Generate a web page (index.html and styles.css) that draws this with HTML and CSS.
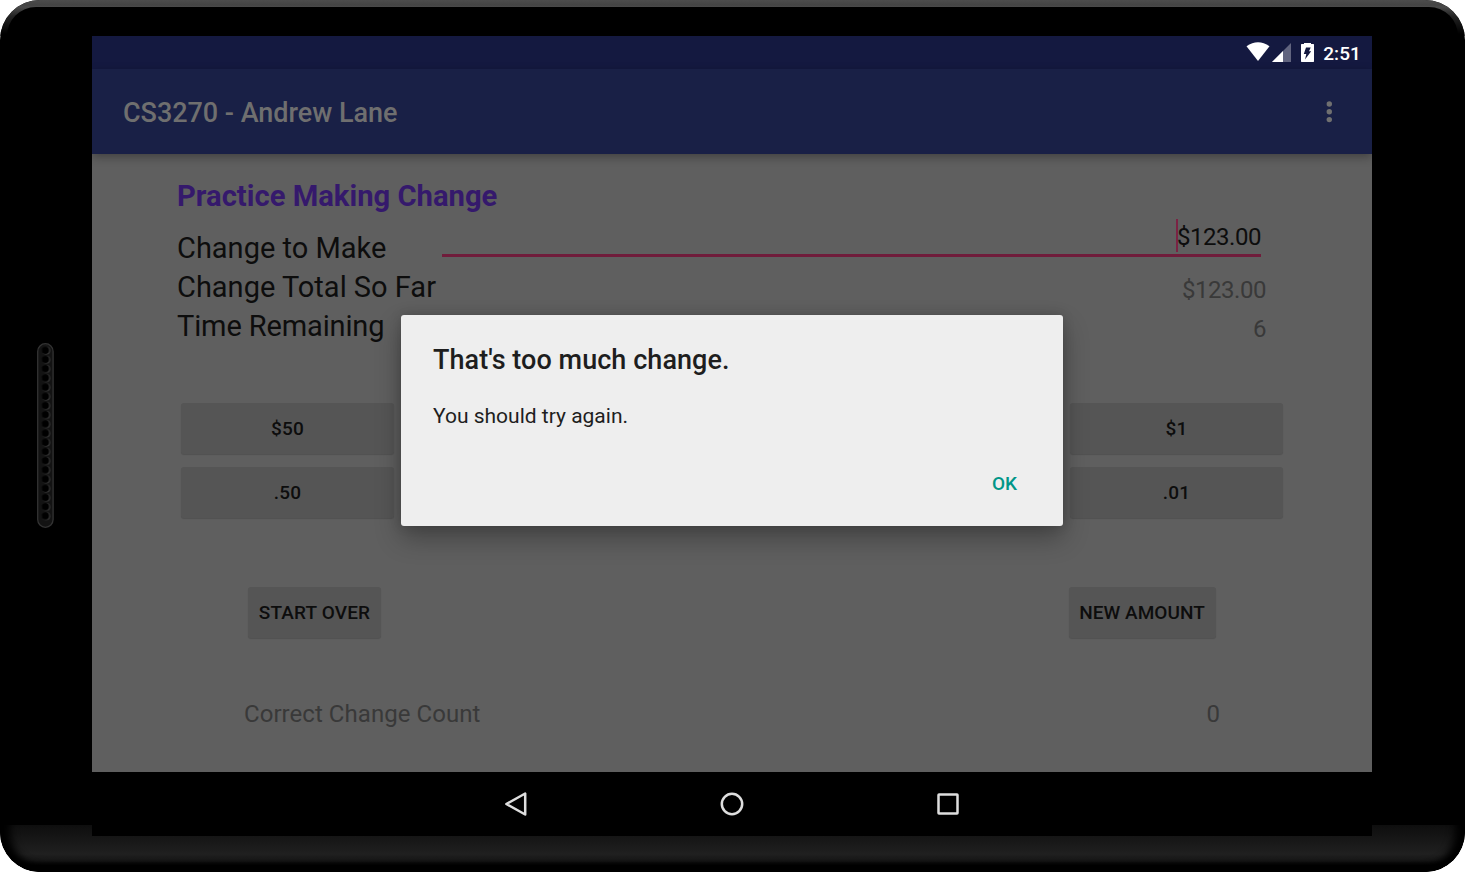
FILE: index.html
```html
<!DOCTYPE html>
<html lang="en">
<head>
<meta charset="utf-8">
<title>CS3270 - Andrew Lane</title>
<link rel="stylesheet" href="styles.css">
</head>
<body>
<div class="device">
  <div class="base"></div>
  <svg class="speaker" width="18" height="186" viewBox="0 0 18 186">
    <defs>
      <pattern id="holes" width="18" height="9.2" patternUnits="userSpaceOnUse" y="3.2">
        <circle cx="9.7" cy="4.8" r="3.9" fill="#444"/>
        <circle cx="9" cy="4.6" r="3.7" fill="#000"/>
      </pattern>
    </defs>
    <rect x="1.7" y="1.7" width="15.4" height="183.6" rx="7.7" fill="#131313" stroke="#333" stroke-width="1.3"/>
    <rect x="3" y="3.2" width="12" height="175" fill="url(#holes)" transform="translate(.5 .5)"/>
  </svg>
  <div class="screen">
    <div class="status">
      <svg class="wifi" width="24" height="20" viewBox="0 0 24 20"><path d="M.5 4.3Q12-3.700 23.500 4.300L12 19Z" fill="#fff"/></svg>
      <svg class="signal" width="19" height="19" viewBox="0 0 19 19"><path d="M19 0V19H0Z" fill="#fff" opacity=".33"/><path d="M11 8V19H0Z" fill="#fff"/></svg>
      <svg class="battery" width="13" height="19" viewBox="0 0 13 19"><path d="M3 0H10V1H12.500L13 1.500V18.500L12.500 19H.5L0 18.500V1.500L.5 1H3Z" fill="#fff"/><path d="M5 4.500H9.700L8 8.300H10.200L4 16.500L5.300 11H2.800Z" fill="#141940"/></svg>
      <span class="clock">2:51</span>
    </div>
    <header class="appbar">
      <h1 class="apptitle">CS3270 - Andrew Lane</h1>
      <svg class="more" width="6" height="22" viewBox="0 0 6 22" fill="#707070"><circle cx="3.300" cy="3" r="2.700"/><circle cx="3.300" cy="10.800" r="2.700"/><circle cx="3.300" cy="18.600" r="2.700"/></svg>
    </header>
    <main class="content">
      <h2 class="heading">Practice Making Change</h2>
      <div class="row edit"><span class="label">Change to Make</span><div class="field"><span class="cursor"></span>$123.00</div></div>
      <div class="row"><span class="label">Change Total So Far</span><span class="value">$123.00</span></div>
      <div class="row"><span class="label tight">Time Remaining</span><span class="value">6</span></div>
      <div class="keys">
        <button class="btn">$50</button><button class="btn">$1</button>
        <button class="btn">.50</button><button class="btn">.01</button>
      </div>
      <div class="actions"><button class="btn">START OVER</button><button class="btn wide">NEW AMOUNT</button></div>
      <div class="count"><span>Correct Change Count</span><span>0</span></div>
    </main>
    <nav class="navbar">
      <svg width="24" height="26" viewBox="0 0 24 26"><path d="M21.200 2.500V23.500L2.300 13Z"/></svg>
      <svg width="24" height="26" viewBox="0 0 24 26"><circle cx="12" cy="13" r="10.200"/></svg>
      <svg width="24" height="26" viewBox="0 0 24 26"><rect x="2.500" y="3.500" width="19" height="19" rx=".5"/></svg>
    </nav>
    <div class="dialog" role="dialog">
      <h3 class="dtitle">That's too much change.</h3>
      <p class="dtext">You should try again.</p>
      <button class="ok">OK</button>
    </div>
  </div>
</div>
</body>
</html>
```
FILE: styles.css
```css
* { box-sizing: border-box; }
body { margin: 0; background: #fff; font-family: Roboto, sans-serif; }
h1, h2, h3, p { margin: 0; }
button { border: 0; font-family: inherit; padding: 0; }
svg { display: block; flex: none; }

.device {
  position: relative;
  width: 1465px;
  height: 872px;
  padding: 36px 93px 36px 92px;
  background: #000;
  border-radius: 40px;
  overflow: hidden;
}
/* lit top edge, fading out down the corners */
.device::before {
  content: "";
  position: absolute;
  inset: 0 0 auto;
  height: 36px;
  background: linear-gradient(#4c4c4c, #444 5px, #4a4a4a 7px, #242424 16px, #000 34px);
}
.base {
  position: absolute;
  left: 0;
  right: 0;
  bottom: 0;
  height: 47px;
  overflow: hidden;
  border-radius: 0 0 40px 40px;
  background: linear-gradient(#0e0e0e, #202020 62%, #181818 75%, #000 89%);
}
.base::before {
  content: "";
  position: absolute;
  inset: -30px 0 0;
  border-radius: 0 0 40px 40px;
  box-shadow: inset 10px 0 8px #000, inset -10px 0 8px #000, inset 0 -6px 8px #000;
}
.device::after {
  content: "";
  position: absolute;
  inset: 7px 7px auto;
  height: 29px;
  border-radius: 34px 34px 0 0;
  background: #000;
}
.speaker { position: absolute; left: 36px; top: 342px; }

.screen {
  position: relative;
  display: flex;
  flex-direction: column;
  width: 1280px;
  height: 800px;
  background: #5f5f5f;
}
.status {
  height: 33px;
  display: flex;
  justify-content: flex-end;
  align-items: center;
  padding: 0 11px 0 0;
  background: #141940;
  color: #fff;
}
.wifi { margin-top: -1px; }
.signal { margin: -1px 0 0 2px; }
.battery { margin: -1px 0 0 10px; }
.clock { margin: 2px 0 0 9px; font-size: 19px; font-weight: 500; line-height: 24px; letter-spacing: .1px; }
.appbar {
  position: relative;
  height: 85px;
  display: flex;
  align-items: center;
  justify-content: space-between;
  padding: 1px 40px 0 31px;
  background: #192046;
  box-shadow: 0 3px 9px rgba(0, 0, 0, .32);
}
.apptitle { padding-top: 2px; font-size: 27px; font-weight: 500; letter-spacing: -.03px; color: #6f6f6f; }
.more { margin-bottom: 1px; }

.content { height: 618px; padding: 22px 85px 0; color: #0d0d0d; }
.heading { height: 39px; line-height: 40px; font-size: 29.2px; font-weight: 700; color: #35196c; }
.row { display: flex; justify-content: space-between; align-items: baseline; height: 39px; padding-right: 21px; }
.label { font-size: 29px; line-height: 39px; }
.tight { letter-spacing: -.13px; }
.value { position: relative; top: 1px; font-size: 24px; letter-spacing: -.45px; color: #393939; }
.row.edit { height: 53px; padding-right: 26px; align-items: flex-end; }
.field {
  display: flex;
  justify-content: flex-end;
  align-items: center;
  width: 819px;
  height: 38px;
  margin-bottom: 11px;
  border-bottom: 3px solid #701c3b;
  font-size: 24px;
  letter-spacing: -.45px;
}
.cursor { width: 2px; height: 33px; margin: 0 -1px 2px 0; background: #7b2344; }

.btn {
  height: 51px;
  border-radius: 3px;
  background: #555;
  box-shadow: 0 1px 1px rgba(0, 0, 0, .15);
  color: #0d0d0d;
  font-size: 19px;
  font-weight: 500;
  letter-spacing: .15px;
}
.keys { display: grid; grid-template-columns: 213px 213px; justify-content: space-between; row-gap: 13px; padding: 57px 4px 0; }
.actions { display: flex; justify-content: space-between; padding: 69px 71px 0; }
.actions .btn { width: 133px; }
.actions .wide { width: 147px; padding-right: 1px; letter-spacing: .05px; }
.count { display: flex; justify-content: space-between; padding: 60px 67px 0; font-size: 24px; line-height: 32px; letter-spacing: .05px; color: #393939; }

.navbar { height: 64px; display: flex; justify-content: center; align-items: center; gap: 192px; background: #000; }
.navbar svg { fill: none; stroke: #dedede; stroke-width: 2.5; stroke-linejoin: round; }

.dialog {
  position: absolute;
  left: 309px;
  top: 279px;
  width: 662px;
  height: 211px;
  padding: 28px 32px;
  border-radius: 3px;
  background: #eee;
  color: #1e1e1e;
  box-shadow: 0 12px 26px rgba(0, 0, 0, .3), 0 0 12px rgba(0, 0, 0, .16);
}
.dtitle { font-size: 27px; font-weight: 500; line-height: 34px; letter-spacing: .05px; }
.dtext { margin-top: 25px; font-size: 21px; line-height: 29px; }
.ok { display: block; margin: 38px 14px 0 auto; background: none; color: #009688; font-size: 19px; font-weight: 500; line-height: 30px; }
```
